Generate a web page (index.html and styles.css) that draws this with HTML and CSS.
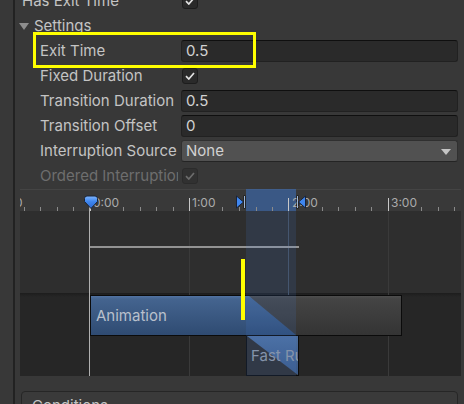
FILE: index.html
```html
<!DOCTYPE html>
<html>
<head>
<meta charset="utf-8">
<link rel="stylesheet" href="styles.css">
</head>
<body>
<div class="panel">
  <div class="row">
    <span class="label l0">Has Exit Time</span>
    <span class="check"><svg width="10" height="8" viewBox="0 0 10 8"><path d="M1 4.2 L3.8 7 L9 1" fill="none" stroke="#e2e2e2" stroke-width="1.7"/></svg></span>
  </div>
  <div class="row">
    <span class="foldout"><span class="tri"></span>Settings</span>
  </div>
  <div class="row exit">
    <span class="label">Exit Time</span>
    <span class="input">0.5</span>
    <div class="highlight"></div>
  </div>
  <div class="row">
    <span class="label">Fixed Duration</span>
    <span class="check"><svg width="10" height="8" viewBox="0 0 10 8"><path d="M1 4.2 L3.8 7 L9 1" fill="none" stroke="#e2e2e2" stroke-width="1.7"/></svg></span>
  </div>
  <div class="row">
    <span class="label">Transition Duration</span>
    <span class="input">0.5</span>
  </div>
  <div class="row">
    <span class="label">Transition Offset</span>
    <span class="input">0</span>
  </div>
  <div class="row">
    <span class="label">Interruption Source</span>
    <span class="dropdown">None<span class="arrow"></span></span>
  </div>
  <div class="row">
    <span class="label disabled">Ordered Interruption</span>
    <span class="check off"><svg width="10" height="8" viewBox="0 0 10 8"><path d="M1 4.2 L3.8 7 L9 1" fill="none" stroke="#6c6c6c" stroke-width="1.7"/></svg></span>
  </div>

  <div class="timeline">
    <div class="ruler"></div>
    <div class="track-upper"></div>
    <div class="track-lower"></div>

    <div class="band-ruler"></div>
    <svg class="ticks" width="441" height="22" viewBox="0 0 441 22" shape-rendering="crispEdges">
      <g fill="#8a8a8a">
        <rect x="4" y="18" width="1" height="4"/>
        <rect x="20" y="18" width="1" height="4"/>
        <rect x="37" y="18" width="1" height="4"/>
        <rect x="53" y="18" width="1" height="4"/>
        <rect x="103" y="18" width="1" height="4"/>
        <rect x="120" y="18" width="1" height="4"/>
        <rect x="136" y="18" width="1" height="4"/>
        <rect x="153" y="18" width="1" height="4"/>
        <rect x="202" y="18" width="1" height="4"/>
        <rect x="219" y="18" width="1" height="4"/>
        <rect x="236" y="18" width="1" height="4"/>
        <rect x="252" y="18" width="1" height="4"/>
        <rect x="302" y="18" width="1" height="4"/>
        <rect x="318" y="18" width="1" height="4"/>
        <rect x="335" y="18" width="1" height="4"/>
        <rect x="351" y="18" width="1" height="4"/>
        <rect x="401" y="18" width="1" height="4"/>
        <rect x="418" y="18" width="1" height="4"/>
        <rect x="434" y="18" width="1" height="4"/>
      </g>
      <g fill="#c8c8c8">
        <rect x="70" y="9" width="1" height="13"/>
        <rect x="169" y="9" width="1" height="13"/>
        <rect x="268" y="9" width="1" height="13"/>
        <rect x="368" y="9" width="1" height="13"/>
      </g>
    </svg>
    <span class="tlabel t-neg">0</span>
    <span class="tlabel t0">0:00</span>
    <span class="tlabel t1">1:00</span>
    <span class="tlabel t2">2:00</span>
    <span class="tlabel t3">3:00</span>

    <div class="gridline g1"></div>
    <div class="gridline g2"></div>
    <div class="gridline g3"></div>

    <div class="hline"></div>
    <div class="playhead"></div>

    <div class="clip anim">
      <div class="anim-grey"></div>
      <span class="clip-text">Animation</span>
    </div>
    <div class="clip fast">
      <div class="fast-blue"></div>
      <span class="clip-text fast-text">Fast Run</span>
    </div>

    <div class="band-track"></div>
    <div class="yellow"></div>

    <svg class="marker m-play" width="16" height="15" viewBox="0 0 16 15">
      <defs>
        <linearGradient id="gp" x1="0" y1="0" x2="0" y2="1">
          <stop offset="0" stop-color="#7fb6ff"/>
          <stop offset="0.45" stop-color="#3f86ee"/>
          <stop offset="1" stop-color="#2b68cf"/>
        </linearGradient>
      </defs>
      <path d="M1.5 3.5 Q1.5 1 4 1 H12 Q14.5 1 14.5 3.5 V6.5 L8 13.5 L1.5 6.5 Z" fill="url(#gp)" stroke="#1b2536" stroke-width="1"/>
    </svg>
    <svg class="marker m-start" width="10" height="14" viewBox="0 0 10 14">
      <path d="M0.5 1 L7.5 7 L0.5 13 Z" fill="#3f86ee" stroke="#18233a" stroke-width="1"/>
      <rect x="7.5" y="0.5" width="2" height="13" fill="#121212"/>
      <rect x="8" y="1" width="1" height="12" fill="#9db6d8"/>
    </svg>
    <svg class="marker m-end" width="10" height="14" viewBox="0 0 10 14">
      <path d="M9.5 1 L2.5 7 L9.5 13 Z" fill="#3f86ee" stroke="#18233a" stroke-width="1"/>
      <rect x="0.5" y="0.5" width="2" height="13" fill="#121212"/>
      <rect x="1" y="1" width="1" height="12" fill="#9db6d8"/>
    </svg>
  </div>

  <div class="conditions">Conditions</div>
</div>
</body>
</html>
```

FILE: styles.css
```css
* { box-sizing: border-box; }
html, body {
  margin: 0;
  padding: 0;
  background: #383838;
  overflow: hidden;
  width: 464px;
  height: 404px;
}
body {
  font-family: Inter, "Noto Sans", sans-serif;
  font-size: 15px;
  color: #c4c4c4;
}
.panel {
  margin-left: 13px;
  margin-top: -12px;
  border-left: 2px solid #222222;
  height: 416px;
  overflow: hidden;
  display: flex;
  flex-direction: column;
}
.row {
  position: relative;
  flex: none;
  height: 25px;
  display: flex;
  align-items: center;
  white-space: nowrap;
}
.label {
  flex: none;
  width: 163px;
  margin-right: 3px;
  padding-left: 25px;
  overflow: hidden;
  white-space: nowrap;
}
.label.l0 { padding-left: 7px; }
.label.disabled { color: #6e6e6e; }

.foldout {
  display: flex;
  align-items: center;
  padding-left: 4px;
}
.tri {
  width: 0;
  height: 0;
  border-left: 5px solid transparent;
  border-right: 5px solid transparent;
  border-top: 7px solid #8e8e8e;
  margin-right: 5px;
  margin-top: 1px;
}

.check {
  flex: none;
  width: 16px;
  height: 16px;
  margin-left: 1px;
  background: #2a2a2a;
  border: 1px solid #1d1d1d;
  border-radius: 3px;
  display: flex;
  align-items: center;
  justify-content: center;
}
.check.off {
  background: #313131;
  border-color: #2b2b2b;
}

.input {
  flex: none;
  width: 277px;
  height: 22px;
  background: #2a2a2a;
  border: 1px solid #212121;
  border-top-color: #0f0f0f;
  border-radius: 3px;
  padding-left: 4px;
  color: #d2d2d2;
  display: flex;
  align-items: center;
}
.dropdown {
  flex: none;
  position: relative;
  width: 277px;
  height: 22px;
  background: #515151;
  border: 1px solid #303030;
  border-bottom-color: #242424;
  border-radius: 3px;
  padding-left: 4px;
  color: #d2d2d2;
  display: flex;
  align-items: center;
}
.arrow {
  position: absolute;
  right: 6px;
  top: 8px;
  width: 0;
  height: 0;
  border-left: 5px solid transparent;
  border-right: 5px solid transparent;
  border-top: 6px solid #c4c4c4;
}
.highlight {
  position: absolute;
  left: 18px;
  top: -6px;
  width: 223px;
  height: 36px;
  border: 3px solid #ffff00;
}

/* timeline */
.timeline {
  position: relative;
  margin: 1px 3px 0 5px;
  height: 187px;
  overflow: hidden;
  display: flex;
  flex-direction: column;
  flex: none;
}
.ruler {
  height: 22px;
  background: #393939;
  border-top: 1px solid #444444;
}
.track-upper {
  height: 82px;
  background: #2e2e2e;
}
.track-lower {
  height: 83px;
  background: linear-gradient(#1d1d1d, #262626 4px);
}
.band-ruler {
  position: absolute;
  left: 226px;
  top: 0;
  width: 50px;
  height: 22px;
  background: rgba(60, 120, 210, 0.5);
}
.ticks {
  position: absolute;
  left: 0;
  top: 0;
}
.tlabel {
  position: absolute;
  top: 7px;
  font-size: 12px;
  line-height: 14px;
  color: #ababab;
}
.t-neg { left: -5px; }
.t0 { left: 73px; }
.t1 { left: 172px; }
.t2 { left: 272px; }
.t3 { left: 371px; }

.gridline {
  position: absolute;
  top: 22px;
  bottom: 0;
  width: 1px;
  background: #3a3a3a;
}
.g1 { left: 169px; }
.g2 { left: 268px; background: #46505e; }
.g3 { left: 368px; }

.hline {
  position: absolute;
  left: 70px;
  top: 57px;
  width: 209px;
  height: 2px;
  background: #939393;
}
.playhead {
  position: absolute;
  left: 69px;
  top: 11px;
  bottom: 0;
  width: 1px;
  background: #b0b0b0;
}

.clip {
  position: absolute;
  border: 1px solid #0b0b0b;
  overflow: hidden;
  display: flex;
  align-items: center;
  white-space: nowrap;
}
.anim {
  left: 70px;
  top: 106px;
  width: 312px;
  height: 41px;
  background: linear-gradient(#5273a2, #44648f 3px, #2f4b72);
}
.anim-grey {
  position: absolute;
  inset: 0;
  background: linear-gradient(#4e4e4e, #444444 3px, #343434);
  clip-path: polygon(158px 0, 100% 0, 100% 100%, 205px 100%);
}
.clip-text {
  position: relative;
  padding-left: 5px;
  color: #b9c0cc;
}
.fast {
  left: 226px;
  top: 146px;
  width: 53px;
  height: 41px;
  background: #2f2f30;
}
.fast-blue {
  position: absolute;
  inset: 0;
  background: linear-gradient(#4d6e9c, #3a5884);
  clip-path: polygon(0 0, 100% 0, 100% 100%);
}
.fast-text {
  padding-left: 4px;
  color: #8e96a2;
}
.band-track {
  position: absolute;
  left: 226px;
  width: 50px;
  top: 22px;
  bottom: 0;
  background: rgba(70, 130, 230, 0.13);
}
.yellow {
  position: absolute;
  left: 221px;
  top: 70px;
  width: 4px;
  height: 61px;
  background: #ffff00;
}
.marker {
  position: absolute;
  top: 6px;
}
.m-play { left: 63px; }
.m-start { left: 216px; }
.m-end { left: 276px; }

.conditions {
  flex: none;
  margin: 15px 0 0 6px;
  height: 40px;
  border: 1px solid #262626;
  border-radius: 4px;
  background: #3a3a3a;
  padding: 4px 0 0 10px;
  width: 437px;
}
```
